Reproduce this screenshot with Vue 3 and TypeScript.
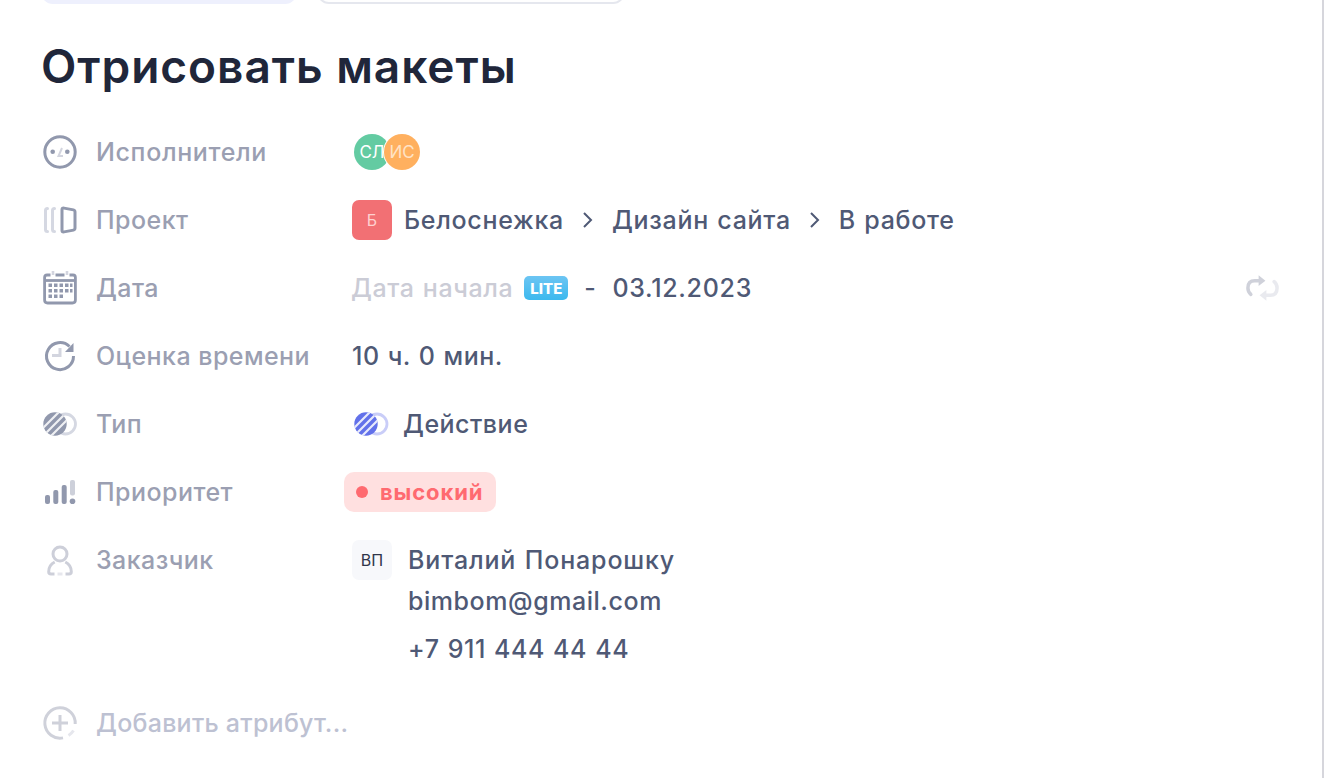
<script setup lang="ts">
const avatars = [
  { text: 'СЛ', cls: 'green' },
  { text: 'ИС', cls: 'orange' },
];
const crumbs = ['Дизайн сайта', 'В работе'];
</script>

<template>
  <div class="page">
    <div class="tabs">
      <div class="tab tab-active"></div>
      <div class="tab tab-plain"></div>
    </div>

    <h1 class="title">Отрисовать макеты</h1>

    <div class="rows">
      <div class="row">
        <div class="label">
          <svg class="icon" viewBox="0 0 36 36" fill="none">
            <circle cx="18" cy="18" r="15.2" stroke="#9198ad" stroke-width="3" />
            <circle cx="10.700" cy="17.700" r="2.300" fill="#9198ad" />
            <circle cx="25.300" cy="17.700" r="2.300" fill="#9198ad" />
            <path d="M20 14l-3.500 8h4.500" stroke="#d3d5df" stroke-width="2" />
          </svg>
          <span class="wide">Исполнители</span>
        </div>
        <div class="value">
          <div class="avatars">
            <div v-for="a in avatars" :key="a.text" class="avatar" :class="a.cls">{{ a.text }}</div>
          </div>
        </div>
      </div>

      <div class="row">
        <div class="label">
          <svg class="icon" viewBox="0 0 36 36" fill="none" stroke-linecap="round">
            <path d="M5.500 6.500q-2 0-2 2v19q0 2 2 2" stroke="#d5d8e2" stroke-width="3" />
            <path d="M12.500 6.500q-2 0-2 2v19q0 2 2 2" stroke="#d5d8e2" stroke-width="3" />
            <path d="M20 7.500q0-1.800 2-1.400l9.500 1.800q1.500.3 1.500 2v16.200q0 1.700-1.500 2l-9.500 1.800q-2 .4-2-1.400z" stroke="#9198ad" stroke-width="3" />
          </svg>
          <span>Проект</span>
        </div>
        <div class="value path">
          <div class="project-mark">Б</div>
          <span>Белоснежка</span>
          <template v-for="c in crumbs" :key="c">
            <svg class="chevron" viewBox="0 0 14 20" fill="none">
              <path d="M3 3l7 7-7 7" stroke="#4f5975" stroke-width="2" />
            </svg>
            <span>{{ c }}</span>
          </template>
        </div>
      </div>

      <div class="row">
        <div class="label">
          <svg class="icon" viewBox="0 0 36 36" fill="none">
            <path d="M8.500 5H5q-2.400 0-2.400 2.400V30q0 3 3 3h24.800q3 0 3-3V7.400Q33.400 5 31 5h-3.500" stroke="#9198ad" stroke-width="2.800" />
            <path d="M13.500 5h9" stroke="#9198ad" stroke-width="3" />
            <path d="M11 1v4M25 1v4" stroke="#d3d5df" stroke-width="2.600" />
            <path d="M3 10.500h30" stroke="#9198ad" stroke-width="2.800" />
            <g fill="#9198ad">
              <rect x="6.500" y="13.500" width="3.500" height="3.500" />
              <rect x="12" y="13.500" width="3.500" height="3.500" />
              <rect x="17.500" y="13.500" width="3.500" height="3.500" />
              <rect x="23" y="13.500" width="3.500" height="3.500" />
              <rect x="28" y="13.500" width="2.500" height="3.500" />
              <rect x="6.500" y="19" width="3.500" height="3.500" />
              <rect x="12" y="19" width="3.500" height="3.500" />
              <rect x="17.500" y="19" width="3.500" height="3.500" />
              <rect x="23" y="19" width="3.500" height="3.500" />
              <rect x="28" y="19" width="2.500" height="3.500" />
              <rect x="6.500" y="24.500" width="3.500" height="3.500" />
              <rect x="12" y="24.500" width="3.500" height="3.500" />
              <rect x="17.500" y="24.500" width="3.500" height="3.500" />
            </g>
          </svg>
          <span>Дата</span>
        </div>
        <div class="value date">
          <span class="muted">Дата начала</span>
          <span class="lite">LITE</span>
          <span class="dash">-</span>
          <span class="due">03.12.2023</span>
          <svg class="repeat" viewBox="0 0 36 26" fill="none">
            <path d="M15 5.500H10q-7 0-7 7.500 0 4 3 6.500" stroke="#cfd1da" stroke-width="3.600" stroke-linecap="round" />
            <path d="M14 0l7 5.500-7 5.500z" fill="#cfd1da" />
            <path d="M21 20.500h5q7 0 7-7.500 0-4-3-6.500" stroke="#e9eaef" stroke-width="3.600" stroke-linecap="round" />
            <path d="M22 15l-7 5.500 7 5.500z" fill="#e9eaef" />
          </svg>
        </div>
      </div>

      <div class="row">
        <div class="label">
          <svg class="icon" viewBox="0 0 36 36" fill="none">
            <path d="M27.500 8.500A13.500 13.500 0 1 0 31.500 18" stroke="#9198ad" stroke-width="3" />
            <path d="M31.500 5v9H23z" fill="#9198ad" />
            <path d="M18 10v7.500h-8" stroke="#d3d5df" stroke-width="3" />
          </svg>
          <span>Оценка времени</span>
        </div>
        <div class="value">10 ч. 0 мин.</div>
      </div>

      <div class="row">
        <div class="label">
          <svg class="icon" viewBox="0 0 36 36" fill="none">
            <defs>
              <clipPath id="type-grey"><circle cx="13" cy="18" r="11.700" /></clipPath>
            </defs>
            <circle cx="23.500" cy="18" r="10" stroke="#d5d8e2" stroke-width="2.800" />
            <circle cx="13" cy="18" r="11.700" fill="#9198ad" />
            <g clip-path="url(#type-grey)" stroke="#fff" stroke-opacity=".85" stroke-width="2.200">
              <path d="M0 23L23 0M0 31L31 0M8 31L31 8" />
            </g>
          </svg>
          <span>Тип</span>
        </div>
        <div class="value kind">
          <svg class="kind-icon" viewBox="0 0 36 24" fill="none">
            <defs>
              <clipPath id="type-blue"><circle cx="12" cy="12" r="11.700" /></clipPath>
            </defs>
            <circle cx="23" cy="12" r="10" stroke="#c9cdf8" stroke-width="2.800" />
            <circle cx="12" cy="12" r="11.700" fill="#6271ea" />
            <g clip-path="url(#type-blue)" stroke="#fff" stroke-opacity=".85" stroke-width="2.200">
              <path d="M0 16L16 0M0 24L24 0M8 24L24 8" />
            </g>
          </svg>
          <span>Действие</span>
        </div>
      </div>

      <div class="row">
        <div class="label">
          <svg class="icon" viewBox="0 0 36 36" fill="none">
            <rect x="3" y="21" width="5" height="9" rx="2" fill="#9198ad" />
            <rect x="11.300" y="16" width="5" height="14" rx="2" fill="#9198ad" />
            <rect x="19.700" y="11" width="5" height="19" rx="2" fill="#9198ad" />
            <rect x="28" y="6" width="5" height="15.500" rx="2" fill="#cdd0da" />
            <circle cx="30.500" cy="27.200" r="2.800" fill="#9198ad" />
          </svg>
          <span>Приоритет</span>
        </div>
        <div class="value">
          <div class="priority"><i></i>высокий</div>
        </div>
      </div>

      <div class="row row-customer">
        <div class="label">
          <svg class="icon" viewBox="0 0 36 36" fill="none" stroke="#cdcfd9" stroke-width="3">
            <circle cx="18" cy="12" r="7" />
            <path d="M12.500 32H9q-2.300 0-2.300-2.300 0-6.700 6-9.700M23.500 32H27q2.300 0 2.300-2.300 0-6.700-6-9.700" />
            <path d="M15.500 32h5" stroke="#e6e7ed" />
          </svg>
          <span>Заказчик</span>
        </div>
        <div class="customer">
          <div class="customer-mark">ВП</div>
          <div class="contacts">
            <div class="contact-line name">Виталий Понарошку</div>
            <div class="contact-line">bimbom@gmail.com</div>
            <div class="contact-line phone">+7 911 444 44 44</div>
          </div>
        </div>
      </div>
    </div>

    <div class="add">
      <svg class="icon" viewBox="0 0 36 36" fill="none">
        <path d="M21 32.900A15.200 15.200 0 1 1 33.200 19" stroke="#cfd1da" stroke-width="3" />
        <path d="M31.500 25.500a15.200 15.200 0 0 1-5 5" stroke="#e6e7ed" stroke-width="3" />
        <path d="M18 10v16M10 18h16" stroke="#cfd1da" stroke-width="3" />
      </svg>
      <span>Добавить атрибут...</span>
    </div>

    <div class="scroll-edge"></div>
  </div>
</template>

<style>
html,
body {
  margin: 0;
  background: #fff;
}
</style>

<style scoped>
.page {
  position: relative;
  width: 1324px;
  height: 778px;
  overflow: hidden;
  box-sizing: border-box;
  padding-left: 41px;
  font-family: Inter, "Noto Sans", sans-serif;
  color: #4f5975;
}

.tabs {
  display: flex;
  gap: 20px;
  height: 4px;
  align-items: flex-end;
}

.tab {
  height: 20px;
  flex: none;
  box-sizing: border-box;
  border-radius: 0 0 12px 12px;
}

.tab-active {
  width: 256px;
  background: #eef0fd;
}

.tab-plain {
  width: 308px;
  background: #fff;
  border: 2px solid #e5e7ee;
}

.title {
  margin: 30px 0 0;
  font-size: 46px;
  line-height: 64px;
  font-weight: 560;
  letter-spacing: 0.97px;
  color: #20263a;
}

.rows {
  margin-top: 20px;
}

.row {
  display: flex;
  align-items: center;
  height: 68px;
}

.row-customer {
  align-items: flex-start;
  height: auto;
}

.label {
  display: flex;
  align-items: center;
  gap: 18px;
  width: 311px;
  flex: none;
  height: 68px;
  font-size: 25px;
  font-weight: 500;
  letter-spacing: 0.45px;
  color: #9b9fb2;
}

.wide {
  letter-spacing: 0.64px;
}

.icon {
  width: 36px;
  height: 36px;
  flex: none;
  margin-left: 1px;
}

.value {
  display: flex;
  align-items: center;
  flex: 1;
  font-size: 25px;
  font-weight: 550;
  letter-spacing: 0.5px;
  word-spacing: 1px;
  color: #4f5975;
}

.avatars {
  display: flex;
}

.avatar {
  width: 36px;
  height: 36px;
  border-radius: 50%;
  display: flex;
  align-items: center;
  justify-content: center;
  font-size: 17px;
  font-weight: 400;
  letter-spacing: 0;
  color: #fff;
}

.avatar + .avatar {
  margin-left: -6px;
  box-shadow: 0 0 0 1px #fff;
}

.green {
  background: #63cba2;
  margin-left: 2px;
}

.orange {
  background: #ffb05f;
  color: #ffe3c6;
}

.path {
  gap: 12px;
  letter-spacing: 0.7px;
}

.project-mark {
  width: 40px;
  height: 40px;
  border-radius: 7px;
  background: #f27074;
  color: #ffd0d0;
  font-size: 16px;
  font-weight: 400;
  letter-spacing: 0;
  display: flex;
  align-items: center;
  justify-content: center;
}

.chevron {
  width: 14px;
  height: 20px;
  margin: 0 5px;
}

.date {
  padding-right: 44px;
}

.muted {
  color: #cbccd6;
  margin-left: -1px;
  letter-spacing: 0.6px;
}

.lite {
  margin-left: 11px;
  width: 44px;
  height: 24px;
  border-radius: 5px;
  background: linear-gradient(180deg, #6cc5f3, #3cb9ee);
  color: #fff;
  font-size: 15px;
  font-weight: 800;
  letter-spacing: 0;
  display: flex;
  align-items: center;
  justify-content: center;
}

.dash {
  margin: 0 16px;
}

.due {
  letter-spacing: 0.7px;
}

.repeat {
  width: 35px;
  height: 26px;
  margin-left: auto;
}

.kind {
  gap: 13px;
}

.kind-icon {
  width: 36px;
  height: 24px;
  flex: none;
  margin-left: 2px;
}

.priority {
  display: flex;
  align-items: center;
  margin-left: -8px;
  height: 40px;
  width: 152px;
  box-sizing: border-box;
  padding-left: 12px;
  border-radius: 10px;
  background: #ffe0e0;
  color: #ff6a70;
  font-size: 22px;
  font-weight: 700;
  letter-spacing: 0.9px;
}

.priority i {
  width: 12px;
  height: 12px;
  border-radius: 50%;
  background: #ff6a70;
  margin-right: 12px;
}

.customer {
  display: flex;
  flex: 1;
  padding-top: 14px;
  gap: 16px;
  font-size: 25px;
  font-weight: 550;
  letter-spacing: 0.55px;
  word-spacing: 1px;
}

.customer-mark {
  width: 40px;
  height: 40px;
  border-radius: 7px;
  background: #f7f8fb;
  color: #30364a;
  font-size: 16px;
  font-weight: 400;
  letter-spacing: 0;
  display: flex;
  align-items: center;
  justify-content: center;
  flex: none;
}

.contact-line {
  line-height: 41px;
}

.name {
  letter-spacing: 0.85px;
}

.phone {
  margin-top: 7px;
}

.add {
  display: flex;
  align-items: center;
  gap: 18px;
  margin-top: 32px;
  height: 42px;
  font-size: 25px;
  font-weight: 500;
  letter-spacing: 0.25px;
  color: #bdc1d2;
}

.scroll-edge {
  position: absolute;
  top: 0;
  right: 0;
  width: 2px;
  height: 100%;
  background: #d6d6dc;
}
</style>
